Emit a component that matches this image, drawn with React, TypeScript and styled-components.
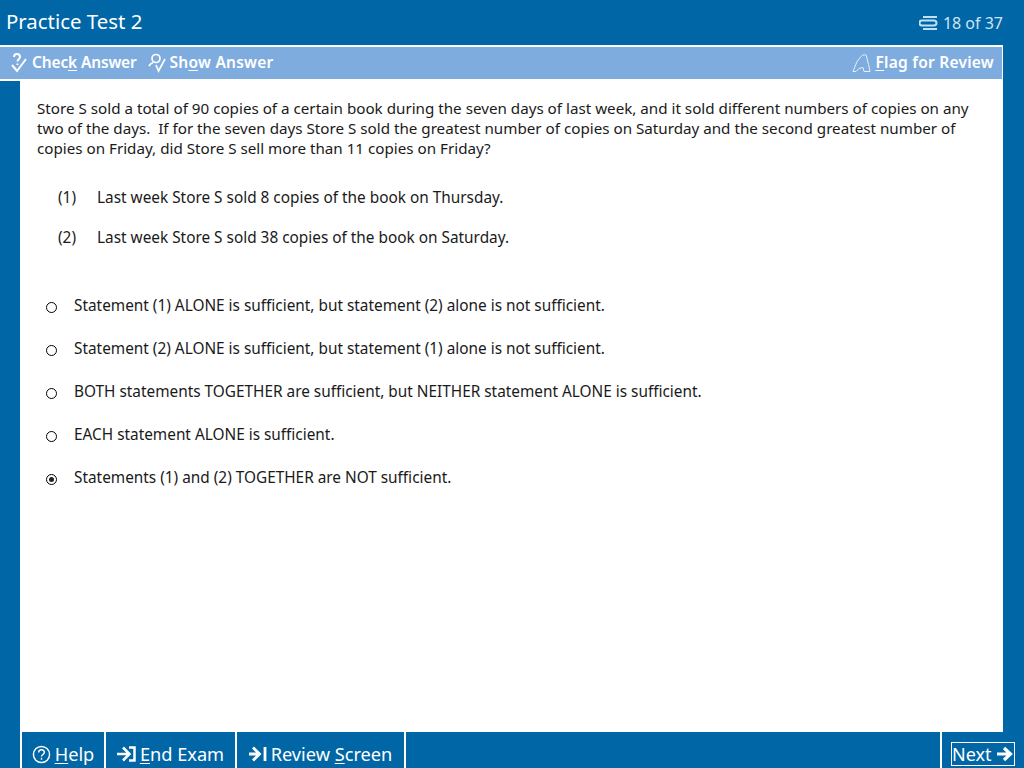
import React from "react";
import styled, { createGlobalStyle } from "styled-components";

const Global = createGlobalStyle`
  html, body { margin: 0; padding: 0; background: #0066a6; }
  body { font-family: "Noto Sans", "DejaVu Sans", sans-serif; }
`;
const Page = styled.div`
  width: 1024px; height: 768px; display: flex; flex-direction: column; overflow: hidden; background: #0066a6;
`;
const Header = styled.header`
  height: 45px; flex: none; display: flex; align-items: center; justify-content: space-between; padding: 0 21px 0 6px; color: #fff;
`;
const Title = styled.h1`
  margin: 0 0 2px; font-size: 20.4px; font-weight: 400; line-height: 43px;
`;
const Counter = styled.div`
  display: flex; align-items: center; gap: 5px; font-size: 16px; color: #cfe4f4;
`;
const Toolbar = styled.div`
  width: 1003px; height: 32px; flex: none; box-sizing: content-box; border-top: 2px solid #fff; background: #7facdf;
  display: flex; align-items: center; color: #fff; font-size: 15.5px; font-weight: 600; box-shadow: inset -1px 0 0 #fff;
`;
const ToolButton = styled.span<{ $push?: boolean }>`
  display: inline-flex; align-items: center; gap: 4px; height: 32px; margin-left: ${(p) => (p.$push ? "auto" : "11px")}; margin-right: ${(p) => (p.$push ? "9px" : "0")};
  &:first-child { margin-left: 10px; }
`;
const ToolText = styled.span<{ $wide?: boolean }>`
  margin-top: -2px;
  letter-spacing: ${(p) => (p.$wide ? "0.25px" : "-0.15px")};
`;
const Key = styled.span`text-decoration: underline; text-underline-offset: 2px;`;
const Middle = styled.div`
  flex: 1; display: flex; min-height: 0;
`;
const Gutter = styled.div`
  width: 20px; flex: none; border-top: 2px solid #fff; box-sizing: border-box;
`;
const Content = styled.main`
  width: 983px; flex: none; background: #fff; color: #1a1a1a; font-size: 15.37px; line-height: 20px; box-sizing: border-box; padding: 19px 17px 0 17px;
`;
const Stem = styled.p`margin: 0 0 30px; white-space: pre-wrap; font-size: 15.2px;`;
const Statement = styled.div`
  display: flex; margin: 0 0 20px 21px;
`;
const Num = styled.span`width: 39px; flex: none;`;
const Options = styled.div`display: flex; flex-direction: column; gap: 23px; margin-top: 48px;`;
const Option = styled.label`display: flex; align-items: center; height: 20px;`;
const Radio = styled.span<{ $on?: boolean }>`
  width: 11px; height: 11px; border-radius: 50%; border: 1.5px solid #000; box-sizing: border-box; margin: 3px 17px 0 9px; flex: none; background: #fff; display: flex; align-items: center; justify-content: center;
  &::after { content: ""; width: 5px; height: 5px; border-radius: 50%; background: ${(p) => (p.$on ? "#222" : "transparent")}; }
`;
const Footer = styled.footer`
  height: 36px; flex: none; display: flex; padding-left: 20px; color: #fff; font-size: 18.2px;
`;
const FootButton = styled.div<{ $w: number }>`
  width: ${(p) => p.$w}px; border-left: 2px solid #fff; box-sizing: border-box; display: flex; align-items: center; justify-content: center; gap: 4px; padding-top: 8px;
`;
const FootText = styled.span`margin-top: -1px;`;
const Spacer = styled.div`flex: 1; border-left: 2px solid #fff;`;
const NextCell = styled.div`
  width: 84px; border-left: 2px solid #fff; box-sizing: border-box; display: flex; align-items: flex-end; padding: 0 0 2px 9px;
`;
const NextBtn = styled.div`
  width: 64px; height: 24px; border: 1px solid #fff; box-sizing: border-box; display: flex; align-items: center; gap: 4px; font-size: 18px; line-height: 20px; padding-bottom: 1px;
`;

const Arrow = () => (
  <svg width="18" height="16" viewBox="0 0 18 16" fill="none" stroke="#fff" strokeWidth="3.2"><path d="M1 8h13M8 2l6.500 6L8 14" /></svg>
);

const opts = [
  "Statement (1) ALONE is sufficient, but statement (2) alone is not sufficient.",
  "Statement (2) ALONE is sufficient, but statement (1) alone is not sufficient.",
  "BOTH statements TOGETHER are sufficient, but NEITHER statement ALONE is sufficient.",
  "EACH statement ALONE is sufficient.",
  "Statements (1) and (2) TOGETHER are NOT sufficient.",
];

export default function App() {
  return (
    <Page>
      <Global />
      <Header>
        <Title>Practice Test 2</Title>
        <Counter>
          <svg width="19" height="14" viewBox="0 0 19 14" fill="none" stroke="#bfe0f5" strokeWidth="2"><path d="M4 1h14M3 4.500h12a2.500 2.500 0 0 1 0 5H3a2.500 2.500 0 0 1 0-5M4 13h14" /></svg>
          18 of 37
        </Counter>
      </Header>
      <Toolbar>
        <ToolButton>
          <svg width="18" height="20" viewBox="0 0 18 20" fill="none" stroke="#fff" strokeWidth="2"><path d="M4 4c0-4 6-4 6 0 0 2-2.500 2-2.500 4.500M7.500 10.500v1.500M2 12l5 6 9-12" /></svg>
          <ToolText>Chec<Key>k</Key> Answer</ToolText>
        </ToolButton>
        <ToolButton>
          <svg width="18" height="20" viewBox="0 0 18 20" fill="none" stroke="#fff" strokeWidth="1.700"><circle cx="8" cy="5.500" r="4" /><path d="M1 13c1-2 2.500-3 4-3.500M8 12l2.500 6L17 6" /></svg>
          <ToolText $wide>Sh<Key>o</Key>w Answer</ToolText>
        </ToolButton>
        <ToolButton $push>
          <svg width="19" height="20" viewBox="0 0 19 20" fill="none" stroke="#e6f0fa" strokeWidth="1"><path d="M1 18.500 4 11c1-3 3-5 5-7.500 1-1.500 3-2 5-1.500l1 3c.5 4 2.500 9 3 13.500h-6l-1-4-4 1-3 3z" /></svg>
          <ToolText $wide><Key>F</Key>lag for Review</ToolText>
        </ToolButton>
      </Toolbar>
      <Middle>
        <Gutter />
        <Content>
          <Stem>{"Store S sold a total of 90 copies of a certain book during the seven days of last week, and it sold different numbers of copies on any two of the days.  If for the seven days Store S sold the greatest number of copies on Saturday and the second greatest number of copies on Friday, did Store S sell more than 11 copies on Friday?"}</Stem>
          <Statement><Num>(1)</Num>Last week Store S sold 8 copies of the book on Thursday.</Statement>
          <Statement><Num>(2)</Num>Last week Store S sold 38 copies of the book on Saturday.</Statement>
          <Options>
            {opts.map((o, i) => (
              <Option key={o}><Radio $on={i === 4} />{o}</Option>
            ))}
          </Options>
        </Content>
      </Middle>
      <Footer>
        <FootButton $w={84}>
          <svg width="19" height="19" viewBox="0 0 20 20" fill="none" stroke="#fff" strokeWidth="1.500"><circle cx="10" cy="10" r="8.500" /><path d="M7 8c0-4 6-4 6 0 0 2-3 2-3 4M10 13.500v2" /></svg>
          <FootText><Key>H</Key>elp</FootText>
        </FootButton>
        <FootButton $w={131}>
          <svg width="19" height="16" viewBox="0 0 19 16" fill="none" stroke="#fff" strokeWidth="2.500"><path d="M0 8h11M6 1.500 12.500 8 6 14.500M12 1.500h5.500v13H12" /></svg>
          <FootText><Key>E</Key>nd Exam</FootText>
        </FootButton>
        <FootButton $w={169}>
          <svg width="18" height="16" viewBox="0 0 18 16" fill="none" stroke="#fff" strokeWidth="2.800"><path d="M0 8h10M4 1.500 10.500 8 4 14.500M16 1v14" /></svg>
          <FootText>Review <Key>S</Key>creen</FootText>
        </FootButton>
        <Spacer />
        <NextCell><NextBtn>Next <Arrow /></NextBtn></NextCell>
      </Footer>
    </Page>
  );
}
